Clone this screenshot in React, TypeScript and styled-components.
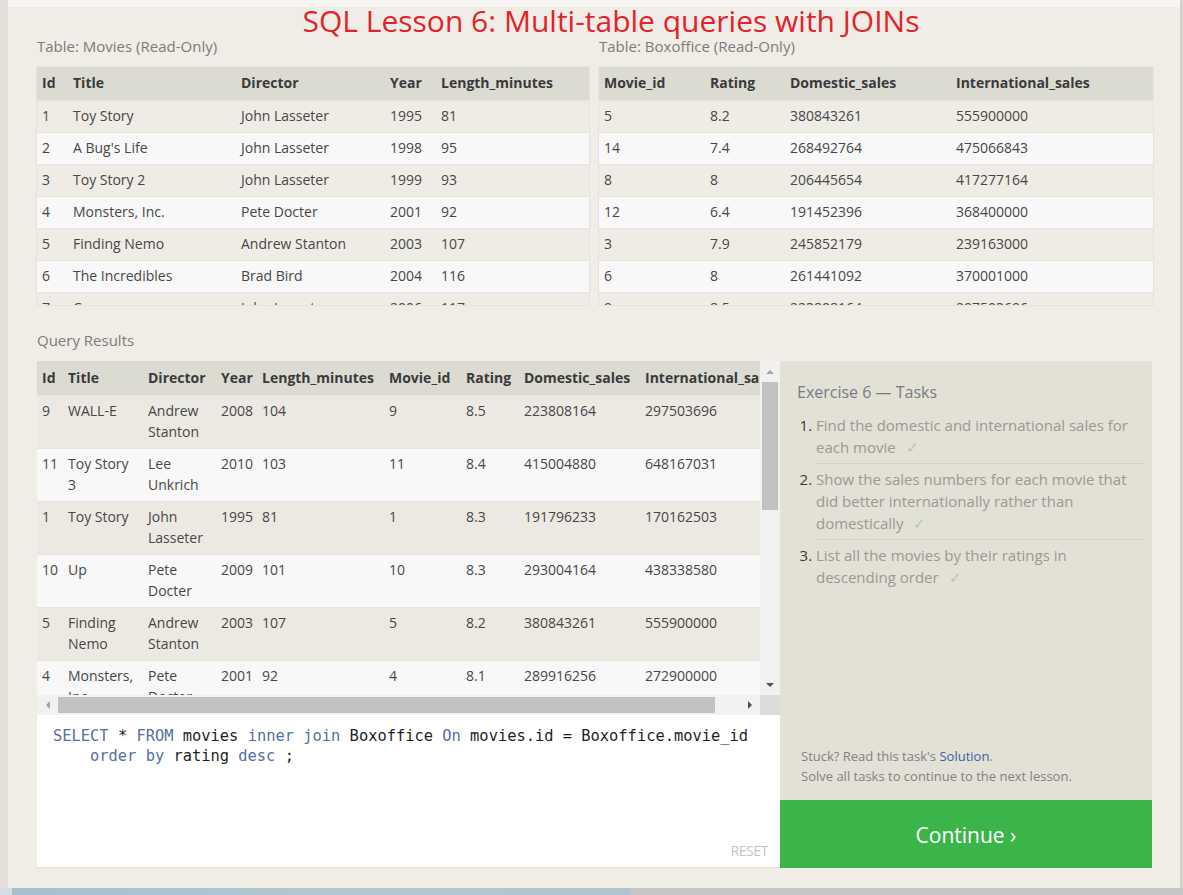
import React from "react";
import styled, { createGlobalStyle } from "styled-components";

const GlobalStyle = createGlobalStyle`
  html, body { margin: 0; padding: 0; }
  body {
    font-family: "Open Sans", "Noto Sans", sans-serif;
    background: #efede6;
    overflow: hidden;
  }
  * { box-sizing: border-box; }
`;

const Page = styled.div`
  width: 1183px;
  height: 895px;
  display: flex;
  flex-direction: column;
`;

const Frame = styled.div`
  display: flex;
  height: 888px;
`;

const LeftEdge = styled.div`
  width: 8px;
  background: #e3e0dc;
`;

const RightEdge = styled.div`
  width: 3px;
  background: #d6d3ce;
`;

const Main = styled.div`
  flex: 1;
  display: flex;
  flex-direction: column;
  background: #efede6;
`;

const TopBar = styled.div`
  height: 7px;
  background: #f7f6f3;
`;

const Content = styled.div`
  flex: 1;
  display: flex;
  flex-direction: column;
  padding: 0 27px 0 29px;
`;

const BottomBar = styled.div`
  height: 7px;
  display: flex;
`;

const BottomPhoto = styled.div`
  width: 630px;
  background: linear-gradient(90deg, #d3dde3 0, #d3dde3 12px, #a6c0d0 12px, #b3c8d4 60%, #aec4d1 100%);
`;

const BottomGray = styled.div`
  flex: 1;
  background: #c6c6c6;
`;

const Title = styled.h1`
  margin: 0;
  padding-left: 32px;
  height: 28px;
  line-height: 28px;
  font-size: 30px;
  font-weight: 400;
  color: #e0242b;
  text-align: center;
  white-space: nowrap;
`;

const TablesRow = styled.div`
  display: grid;
  grid-template-columns: 552px 554px;
  gap: 10px;
`;

const TableBlock = styled.div`
  display: flex;
  flex-direction: column;
`;

const Label = styled.div<{ $before?: number; $after?: number }>`
  font-size: 15px;
  line-height: 20px;
  color: #7b7b7b;
  margin-top: ${(p) => p.$before ?? 0}px;
  margin-bottom: ${(p) => p.$after ?? 11}px;
`;

const TableViewport = styled.div`
  height: 238px;
  overflow: hidden;
  background: #f8f8f8;
  box-shadow: 0 0 0 1px #e5e3dc;
`;

const DataTable = styled.table<{ $width?: number }>`
  width: ${(p) => (p.$width ? `${p.$width}px` : "100%")};
  border-collapse: collapse;
  table-layout: fixed;
  font-size: 14px;
  color: #474747;
`;

const Th = styled.th<{ $tall?: boolean }>`
  background: #dcdbd2;
  text-align: left;
  font-weight: 700;
  color: #3a3a3a;
  height: ${(p) => (p.$tall ? 34 : 33)}px;
  padding: ${(p) => (p.$tall ? "0 5px" : "0 5px 1px")};
  white-space: nowrap;
  overflow: hidden;
`;

const Tr = styled.tr<{ $odd: boolean; $tall?: boolean }>`
  background: ${(p) => (p.$odd ? (p.$tall ? "#ebe9e2" : "#eeece5") : "#f8f8f8")};
`;

const Td = styled.td<{ $tall?: boolean }>`
  height: ${(p) => (p.$tall ? 53 : 32)}px;
  padding: ${(p) => (p.$tall ? "4px 5px 0" : "0 5px 1px")};
  vertical-align: ${(p) => (p.$tall ? "top" : "middle")};
  line-height: 21px;
  border-top: 1px solid #e6e4de;
`;

const LowerSection = styled.div`
  display: flex;
  height: 507px;
  margin-top: 11px;
`;

const LeftColumn = styled.div`
  width: 743px;
  display: flex;
  flex-direction: column;
`;

const ResultsPanel = styled.div`
  height: 354px;
  display: grid;
  grid-template-columns: 1fr 20px;
  grid-template-rows: 1fr 20px;
  background: #f8f8f8;
`;

const ResultsViewport = styled.div`
  overflow: hidden;
`;

const VScroll = styled.div`
  display: flex;
  flex-direction: column;
  background: #f1f1f1;
`;

const HScroll = styled.div`
  display: flex;
  background: #f1f1f1;
`;

const ScrollCorner = styled.div`
  background: #dcdcdc;
`;

const ArrowBox = styled.div<{ $grow?: boolean }>`
  width: ${(p) => (p.$grow ? "21px" : "100%")};
  height: ${(p) => (p.$grow ? "100%" : "21px")};
  flex: none;
  display: flex;
  align-items: center;
  justify-content: center;
`;

const Arrow = styled.span<{ $dir: "up" | "down" | "left" | "right"; $dark?: boolean }>`
  width: 0;
  height: 0;
  border-style: solid;
  ${(p) => {
    const c = p.$dark ? "#505050" : "#a3a3a3";
    switch (p.$dir) {
      case "up":
        return `border-width: 0 4px 4px 4px; border-color: transparent transparent ${c} transparent;`;
      case "down":
        return `border-width: 4px 4px 0 4px; border-color: ${c} transparent transparent transparent;`;
      case "left":
        return `border-width: 4px 4px 4px 0; border-color: transparent ${c} transparent transparent;`;
      default:
        return `border-width: 4px 0 4px 4px; border-color: transparent transparent transparent ${c};`;
    }
  }}
`;

const VThumb = styled.div`
  height: 128px;
  margin: 0 2px;
  background: #c1c1c1;
`;

const HThumb = styled.div`
  width: 657px;
  margin: 2px 0;
  background: #c1c1c1;
`;

const Spacer = styled.div`
  flex: 1;
`;

const Editor = styled.div`
  flex: 1;
  background: #ffffff;
  display: flex;
  flex-direction: column;
  padding: 11px 12px 8px 16px;
  border-bottom: 1px solid #dedcd6;
`;

const CodeLine = styled.div<{ $indent?: boolean }>`
  font-family: "DejaVu Sans Mono", "Liberation Mono", monospace;
  font-size: 15.4px;
  line-height: 20px;
  color: #1f1f1f;
  white-space: pre;
  padding-left: ${(p) => (p.$indent ? "37px" : "0")};
`;

const Kw = styled.span`
  color: #55709f;
`;

const Reset = styled.div`
  margin-top: auto;
  align-self: flex-end;
  font-size: 14px;
  line-height: 16px;
  color: #c4c4c4;
  letter-spacing: -0.4px;
`;

const RightColumn = styled.div`
  width: 372px;
  display: flex;
  flex-direction: column;
`;

const TasksPanel = styled.div`
  flex: 1;
  background: #e3e0d6;
  padding: 19px 8px 14px 17px;
  display: flex;
  flex-direction: column;
`;

const TasksTitle = styled.h3`
  margin: 0;
  font-size: 16px;
  line-height: 24px;
  font-weight: 400;
  color: #777c84;
`;

const TaskList = styled.ol`
  margin: 10px 0 0;
  padding-left: 19px;
`;

const TaskItem = styled.li<{ $last?: boolean }>`
  font-size: 15px;
  line-height: 22px;
  color: #3a3a3a;
  padding: 4px 0 5px;
  border-bottom: ${(p) => (p.$last ? "none" : "1px solid #d3d0c7")};
  &:first-child { padding-top: 0; }
`;

const TaskText = styled.span`
  color: #9a9994;
`;

const Check = styled.span`
  color: #a9cda5;
  margin-left: 10px;
`;

const Help = styled.div`
  margin-top: auto;
  font-size: 13px;
  line-height: 20px;
  color: #828282;
  padding-left: 4px;
`;

const SolutionLink = styled.span`
  color: #3c5ea8;
`;

const ContinueButton = styled.div`
  height: 68px;
  padding-top: 1px;
  background: #3bb54a;
  color: #ffffff;
  font-size: 21px;
  display: flex;
  align-items: center;
  justify-content: center;
`;

const movies = [
  ["1", "Toy Story", "John Lasseter", "1995", "81"],
  ["2", "A Bug's Life", "John Lasseter", "1998", "95"],
  ["3", "Toy Story 2", "John Lasseter", "1999", "93"],
  ["4", "Monsters, Inc.", "Pete Docter", "2001", "92"],
  ["5", "Finding Nemo", "Andrew Stanton", "2003", "107"],
  ["6", "The Incredibles", "Brad Bird", "2004", "116"],
  ["7", "Cars", "John Lasseter", "2006", "117"],
  ["8", "Ratatouille", "Brad Bird", "2007", "115"],
];

const boxoffice = [
  ["5", "8.2", "380843261", "555900000"],
  ["14", "7.4", "268492764", "475066843"],
  ["8", "8", "206445654", "417277164"],
  ["12", "6.4", "191452396", "368400000"],
  ["3", "7.9", "245852179", "239163000"],
  ["6", "8", "261441092", "370001000"],
  ["9", "8.5", "223808164", "297503696"],
  ["11", "8.4", "415004880", "648167031"],
];

const results = [
  ["9", "WALL-E", "Andrew Stanton", "2008", "104", "9", "8.5", "223808164", "297503696"],
  ["11", "Toy Story 3", "Lee Unkrich", "2010", "103", "11", "8.4", "415004880", "648167031"],
  ["1", "Toy Story", "John Lasseter", "1995", "81", "1", "8.3", "191796233", "170162503"],
  ["10", "Up", "Pete Docter", "2009", "101", "10", "8.3", "293004164", "438338580"],
  ["5", "Finding Nemo", "Andrew Stanton", "2003", "107", "5", "8.2", "380843261", "555900000"],
  ["4", "Monsters, Inc.", "Pete Docter", "2001", "92", "4", "8.1", "289916256", "272900000"],
];

const movieCols = [
  { name: "Id", w: 31 },
  { name: "Title", w: 168 },
  { name: "Director", w: 149 },
  { name: "Year", w: 51 },
  { name: "Length_minutes", w: 153 },
];

const boxCols = [
  { name: "Movie_id", w: 106 },
  { name: "Rating", w: 80 },
  { name: "Domestic_sales", w: 166 },
  { name: "International_sales", w: 202 },
];

const resultCols = [
  { name: "Id", w: 26 },
  { name: "Title", w: 80 },
  { name: "Director", w: 73 },
  { name: "Year", w: 41 },
  { name: "Length_minutes", w: 127 },
  { name: "Movie_id", w: 77 },
  { name: "Rating", w: 58 },
  { name: "Domestic_sales", w: 121 },
  { name: "International_sales", w: 150 },
];

type Col = { name: string; w: number };

function Table({ cols, rows, tall, width }: { cols: Col[]; rows: string[][]; tall?: boolean; width?: number }) {
  return (
    <DataTable $width={width}>
      <colgroup>
        {cols.map((c) => (
          <col key={c.name} width={c.w} />
        ))}
      </colgroup>
      <thead>
        <tr>
          {cols.map((c) => (
            <Th key={c.name} $tall={tall}>
              {c.name}
            </Th>
          ))}
        </tr>
      </thead>
      <tbody>
        {rows.map((r, i) => (
          <Tr key={i} $odd={i % 2 === 0} $tall={tall}>
            {r.map((v, j) => (
              <Td key={j} $tall={tall}>
                {v}
              </Td>
            ))}
          </Tr>
        ))}
      </tbody>
    </DataTable>
  );
}

export default function App() {
  return (
    <>
      <GlobalStyle />
      <Page>
        <Frame>
          <LeftEdge />
          <Main>
            <TopBar />
            <Content>
              <Title>SQL Lesson 6: Multi-table queries with JOINs</Title>
              <TablesRow>
                <TableBlock>
                  <Label $before={1}>Table: Movies (Read-Only)</Label>
                  <TableViewport>
                    <Table cols={movieCols} rows={movies} />
                  </TableViewport>
                </TableBlock>
                <TableBlock>
                  <Label $before={1}>Table: Boxoffice (Read-Only)</Label>
                  <TableViewport>
                    <Table cols={boxCols} rows={boxoffice} />
                  </TableViewport>
                </TableBlock>
              </TablesRow>
              <Label $before={25} $after={0}>Query Results</Label>
              <LowerSection>
                <LeftColumn>
                  <ResultsPanel>
                    <ResultsViewport>
                      <Table cols={resultCols} rows={results} tall width={753} />
                    </ResultsViewport>
                    <VScroll>
                      <ArrowBox>
                        <Arrow $dir="up" />
                      </ArrowBox>
                      <VThumb />
                      <Spacer />
                      <ArrowBox>
                        <Arrow $dir="down" $dark />
                      </ArrowBox>
                    </VScroll>
                    <HScroll>
                      <ArrowBox $grow>
                        <Arrow $dir="left" />
                      </ArrowBox>
                      <HThumb />
                      <Spacer />
                      <ArrowBox $grow>
                        <Arrow $dir="right" $dark />
                      </ArrowBox>
                    </HScroll>
                    <ScrollCorner />
                  </ResultsPanel>
                  <Editor>
                    <CodeLine>
                      <Kw>SELECT</Kw> * <Kw>FROM</Kw> movies <Kw>inner</Kw> <Kw>join</Kw> Boxoffice <Kw>On</Kw> movies.id = Boxoffice.movie_id
                    </CodeLine>
                    <CodeLine $indent>
                      <Kw>order</Kw> <Kw>by</Kw> rating <Kw>desc</Kw> ;
                    </CodeLine>
                    <Reset>RESET</Reset>
                  </Editor>
                </LeftColumn>
                <RightColumn>
                  <TasksPanel>
                    <TasksTitle>Exercise 6 — Tasks</TasksTitle>
                    <TaskList>
                      <TaskItem>
                        <TaskText>Find the domestic and international sales for each movie</TaskText>
                        <Check>✓</Check>
                      </TaskItem>
                      <TaskItem>
                        <TaskText>Show the sales numbers for each movie that did better internationally rather than domestically</TaskText>
                        <Check>✓</Check>
                      </TaskItem>
                      <TaskItem $last>
                        <TaskText>List all the movies by their ratings in descending order</TaskText>
                        <Check>✓</Check>
                      </TaskItem>
                    </TaskList>
                    <Help>
                      Stuck? Read this task's <SolutionLink>Solution</SolutionLink>.
                      <br />
                      Solve all tasks to continue to the next lesson.
                    </Help>
                  </TasksPanel>
                  <ContinueButton>Continue ›</ContinueButton>
                </RightColumn>
              </LowerSection>
            </Content>
          </Main>
          <RightEdge />
        </Frame>
        <BottomBar>
          <BottomPhoto />
          <BottomGray />
        </BottomBar>
      </Page>
    </>
  );
}
